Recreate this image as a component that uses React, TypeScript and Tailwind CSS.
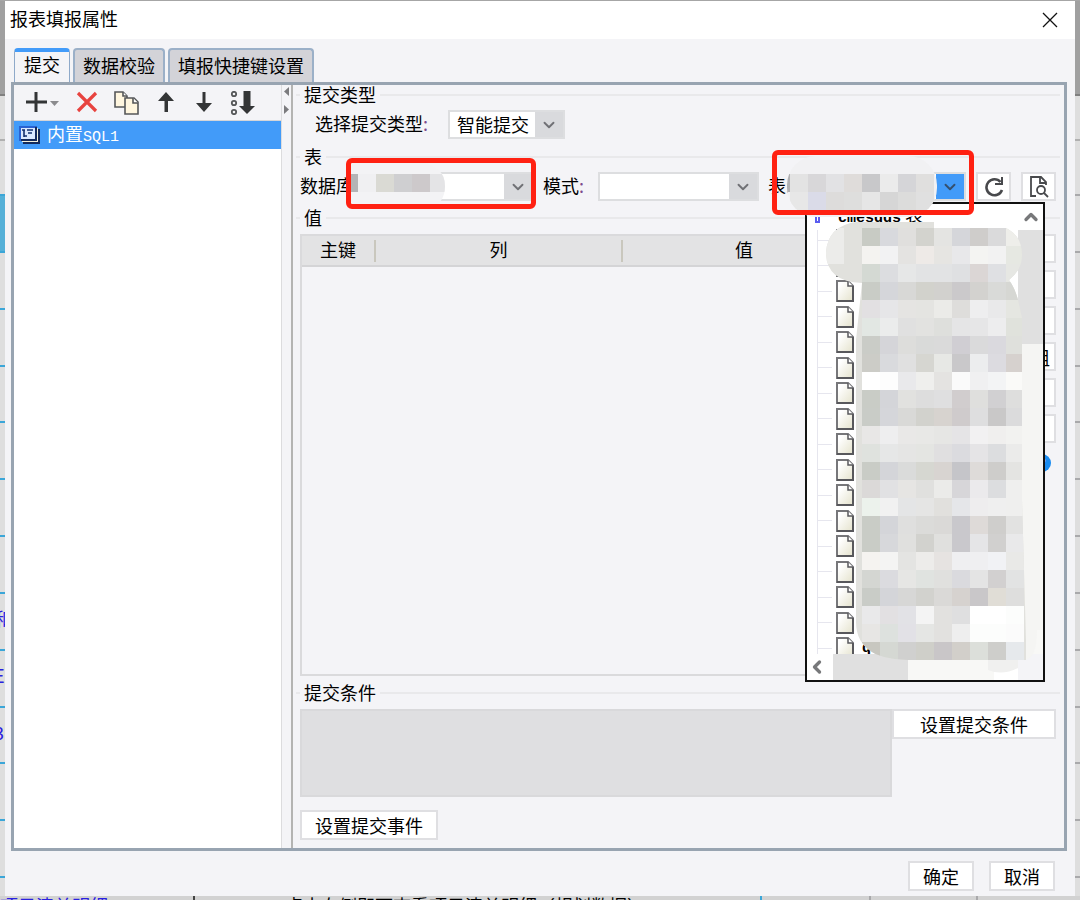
import { ReactNode } from 'react'
import { ChevronDown, ChevronLeft, ChevronUp } from 'lucide-react'

const TABS = ['提交', '数据校验', '填报快捷键设置']

// One colour per 18px cell, left to right, top to bottom
const LIST_CELLS = [
  'c8cbc4 d8d9dd e0dfdd d3d3ce e4e4e2 d5d6da cfcdcb dadadb eeeeea',
  'f4f3f0 f2f2f3 e4e3e1 eeeae7 e6e5e2 e8e8ea f4f4f2 f2f2f2 e6e8e2',
  'd4d9d3 dcdde0 e6e7e7 e2e3e4 e2e3e4 dfe0e2 dbd6d5 dfe0e3 e6e7e3',
  'c9ccc6 d5d6da d8d8d6 d2d2cc d2d1ce cbc9cb d3d2cf d9dad8 d6d7d3',
  'e2e0e2 e6e6e8 e5e4e2 e4e4e1 ebebe8 dedddb eeeeef e9e9ea e5e6e1',
  'e2e7e3 ebecec e0e0e0 e2e2e0 dedfdc e5e5e6 e6e6e7 ededee e0e2dc',
  'caccc7 d5d5d9 dddddb d9dad9 dadada d0ced3 dadadb dad9de dfe0dc',
  'ccccc7 d9dadd e0e0e0 d6d6d1 e7e8e5 c9c8ca ecedee dcdbe0 d6d1ce',
  'ffffff fdfdfd e9e9eb efefed e4e3e1 fafafa f0f0f1 f3f4f5 fafaf8',
  'c9ccc6 d4d5d9 e1e1df dddddd dfdfe0 d1cdce dfdfdd d1d0d2 dededd',
  'c9ccc7 d5d6da d9d9d7 d2d2cd d7d3cf cfcbcc dededf c9c8c8 dbdbdc',
  'e8e7e6 eeeeef e9e8e7 e8e8e6 e6e6e4 e5e4e6 f2f1f2 f0efee f2f2f0',
  'dfe2de e6e7e7 e5e5e4 e4e5e2 e0dfe0 dbdbdf e5e4e6 dcdddf ebebea',
  'c9ccc6 d4d5d9 dadbda d6d7d1 d8d4d1 c5c5c9 dedbd9 cecdcb e4e4e2',
  'dbd9d8 e1e1e3 e6e5e3 e0e0de ebebe9 d7d6d9 ebeaec dcdddf efefee',
  'ecf2ec f1f1f1 e4e5e6 e5e5e4 e1e0dd e5e6e9 eeedee efefef efefee',
  'c9ccc6 d4d5d9 dfdfde dbdbd9 dad9d7 c9c8cc dedad8 cfcecc e2e2e1',
  'c9ccc6 d7d8db e0e0de d2d2ce e0e0de c9c8cc e5e5e7 d1d0cf e9e9ea',
  'f5f3f0 f4f4f3 e4e4e2 edecea e6e3e1 efeff1 efeff1 f1f2f5 e9e9e7',
  'd4d6d2 dbdbdf e6e6e4 e0e3e0 e0e0de dadade e4e4e4 d2d0d0 e2e3e3',
  'c9ccc7 d4d5d9 d7d7d6 d2d2ce dad9d7 d6d2cf c9c7c9 e0ddd6 dededd',
  'e9e9ea e2e0e2 e2e2e6 f4f4f4 e2e1df dfdfe0 ffffff ffffff fcfdfc',
  'e7e6e4 dde1de e2e1e6 e5e6e4 e2e1df eeeeee fcfdfc fcfdfc fbfbfb',
  'c8c7c0 d5d8d3 d0d0cf cfcfc9 c9c6c8 d2cfca dcdfda cececb e6e9ec'
]

const TABLE_CELLS = [
  'e3e3e3 d8d7d9 e2e2e4 dfdcda c8c8ca ebebeb d5d5d8 e0dfde',
  'e7e7e7 dadbe8 dddcdb dededd e6e6e6 d6d6d6 dcdcdb e0e0e0'
]

const DATABASE_CELLS = ['f0f0f2 dadad4 cfcfd1 cdc9cb e4e4e6']

function Cells({ rows, x, y }: { rows: string[]; x: number; y: number }) {
  return (
    <>
      {rows.map((row, r) =>
        row.split(' ').map((color, c) => (
          <rect key={`${r}-${c}`} x={x + c * 18} y={y + r * 18} width={18} height={18} fill={`#${color}`} shapeRendering="crispEdges" />
        ))
      )}
    </>
  )
}

function Legend({ children }: { children: ReactNode }) {
  return (
    <div className="flex items-center h-5 -mx-1 gap-1 leading-[18px]">
      <span className="w-1 h-0.5 bg-[#e9e9eb]" />
      <h2 className="pb-0.5">{children}</h2>
      <span className="flex-1 h-0.5 bg-[#e9e9eb]" />
    </div>
  )
}

function FieldLabel({ htmlFor, children }: { htmlFor: string; children: ReactNode }) {
  return (
    <label htmlFor={htmlFor} className="flex pb-1 leading-6 whitespace-nowrap">
      {children}
      <span className="w-[9px] text-[#7d4a8d]">:</span>
    </label>
  )
}

interface ComboProps {
  id: string
  value?: string
  active?: boolean
}

function Combo({ id, value = '', active = false }: ComboProps) {
  return (
    <div className="relative flex h-[29px] border-2 border-[#dddee0] bg-white">
      <select id={id} defaultValue={value} className="appearance-none flex-1 min-w-0 pl-[7px] leading-[25px] bg-white outline-none">
        <option value={value}>{value}</option>
      </select>
      <span className={`flex items-center justify-center w-7 pointer-events-none ${active ? 'bg-[#429bf9] text-[#35506e]' : 'bg-[#d9dadd] text-[#707175]'}`}>
        <ChevronDown className="w-[18px] h-[18px]" strokeWidth={2.5} />
      </span>
    </div>
  )
}

function Button({ className = '', label, children }: { className?: string; label?: string; children?: ReactNode }) {
  return (
    <button type="button" aria-label={label} className={`flex items-center justify-center shrink-0 bg-white border-2 border-[#dfdfe2] leading-none ${className}`}>
      {children}
    </button>
  )
}

function PageIcon() {
  return (
    <svg className="w-[18px] h-[22px]" viewBox="0 0 18 22" fill="none">
      <defs>
        <linearGradient id="page" x1="0" y1="0" x2="1" y2="1">
          <stop offset="0.2" stopColor="#ffffff" />
          <stop offset="1" stopColor="#e4e2cc" />
        </linearGradient>
      </defs>
      <path d="M1 1h11l5 5v15H1z" fill="url(#page)" stroke="#77777a" strokeWidth="2" />
      <path d="M12 1v5h5" fill="#ffffff" stroke="#5a5a5e" strokeWidth="1.5" />
      <path d="M1 21h16V6" stroke="#58585c" strokeWidth="2" />
    </svg>
  )
}

function Toolbar() {
  return (
    <div className="flex items-center h-9 pl-3 bg-[#f4f4f7] border-b border-[#d5d5d8]">
      <button type="button" aria-label="添加" className="mr-4">
        <svg className="w-[34px] h-6" viewBox="0 0 34 24">
          <path d="M10 1v20M0 11h21" stroke="#333536" strokeWidth="3" />
          <path d="M24 10h9l-4.500 5z" fill="#8b8b8e" />
        </svg>
      </button>
      <button type="button" aria-label="删除" className="mr-4">
        <svg className="w-[22px] h-6" viewBox="0 0 22 24">
          <path d="M2 2l18 18M20 2L2 20" stroke="#e8433f" strokeWidth="3.2" />
        </svg>
      </button>
      <button type="button" aria-label="复制" className="mr-[18px]">
        <svg className="w-[26px] h-6" viewBox="0 0 26 24" stroke="#555759" strokeWidth="1.6">
          <path d="M1 1h8l4 4v11H1z" fill="#fff6df" />
          <path d="M9 1v4h4" fill="#fff" />
          <path d="M11 7h9l4 4v12H11z" fill="#fff6df" />
          <path d="M19 7v5h5" fill="#fff" />
        </svg>
      </button>
      <button type="button" aria-label="上移" className="mr-[22px]">
        <svg className="w-4 h-6" viewBox="0 0 16 24" fill="#333536">
          <path d="M8 1l8 9H10v11H6.500V10H0z" />
        </svg>
      </button>
      <button type="button" aria-label="下移" className="mr-[18px]">
        <svg className="w-4 h-6" viewBox="0 0 16 24" fill="#333536">
          <path d="M8 21l8-9H9.500V1H6.500v11H0z" />
        </svg>
      </button>
      <button type="button" aria-label="置底">
        <svg className="w-[26px] h-6" viewBox="0 0 26 24">
          <g fill="none" stroke="#555759" strokeWidth="1.8">
            <circle cx="4" cy="3" r="2.200" />
            <circle cx="4" cy="12" r="2.200" />
            <circle cx="4" cy="21" r="2.200" />
          </g>
          <path d="M13.500 0h7v15H25l-8 8-8-8h4.500z" fill="#333536" />
        </svg>
      </button>
    </div>
  )
}

function SourcePane() {
  return (
    <div className="flex flex-col w-[268px] shrink-0 bg-white border-r border-[#dcdcde]">
      <Toolbar />
      <ul>
        <li className="flex items-center gap-1.5 h-7 pl-[5px] bg-[#429bf9] text-white">
          <svg className="w-[22px] h-5" viewBox="0 0 22 20">
            <path d="M4 4h17v15H4z" fill="#132a5c" />
            <path d="M3 3h16v14H3z" fill="#f3f1dc" />
            <path d="M1 2h16v13H1z" fill="#dbe9ff" stroke="#2a62d0" strokeWidth="2" />
            <path d="M17 2v13H2" fill="none" stroke="#132a5c" strokeWidth="2" />
            <path d="M3 5h3M5 5v7M8 5h6M9 8h4M5 11h3" fill="none" stroke="#12306f" strokeWidth="1.6" />
          </svg>
          <span className="leading-6">
            内置<span className="text-[15px] font-['Liberation_Mono',monospace]">SQL1</span>
          </span>
        </li>
      </ul>
    </div>
  )
}

function Splitter() {
  return (
    <div className="flex justify-end w-[11px] shrink-0 pt-0.5 pr-px border-r-2 border-[#b4b4b2]">
      <svg className="w-1.5 h-7" viewBox="0 0 6 28" fill="#7b7b7e">
        <path d="M5 0v9L0 4.500z" />
        <path d="M0 18v9l5-4.500z" />
      </svg>
    </div>
  )
}

function TablePopup() {
  return (
    <div className="absolute z-10 left-0 top-[30px] w-[240px] h-[480px] bg-white border-2 border-[#111] leading-none">
      <div className="flex h-[450px]">
        <div className="flex-1 overflow-hidden">
          <ul className="grid auto-rows-fr h-[459px]">
            <li className="flex items-center gap-[18px] pl-2">
              <span className="w-[5px] h-3 border-2 border-[#5a5cf0]" />
              <span className="pb-0.5 whitespace-nowrap">
                <b className="text-[15px] font-['Liberation_Mono',monospace]">cmesdds</b> 表
              </span>
            </li>
            {Array.from({ length: 17 }, (_, i) => (
              <li key={i} className="flex items-center ml-2.5 pb-1 border-l border-[#e6e6ee]">
                <span className="w-3.5 h-px mr-1 bg-[#e6e6ee]" />
                <PageIcon />
                {i === 16 && <b className="ml-2 text-[15px] font-['Liberation_Mono',monospace]">q</b>}
              </li>
            ))}
          </ul>
        </div>
        <div className="flex flex-col w-[25px] bg-[#f8f8f6]">
          <span className="flex items-center justify-center h-[26px] bg-white">
            <ChevronUp className="w-5 h-5 text-[#77787a]" strokeWidth={4} />
          </span>
          <span className="h-[115px] bg-[#e0e0e0]" />
        </div>
      </div>
      <div className="flex h-[26px] bg-[#f8f8f6]">
        <span className="flex items-center justify-center w-[26px] bg-white">
          <ChevronLeft className="w-5 h-5 -ml-1.5 text-[#77787a]" strokeWidth={4} />
        </span>
        <span className="w-[75px] bg-[#e0e0e0]" />
        <span className="flex-1" />
        <span className="w-6 bg-white" />
        <span className="w-[25px] bg-[#f4f4f7]" />
      </div>
      <svg className="absolute left-[18px] top-4 w-[218px] h-[456px]" viewBox="825 220 218 456">
        <defs>
          <clipPath id="list-blob">
            <path d="M856 222H934V228H1006Q1022 236 1022 255Q1022 270 1009 280Q1015 288 1018 300L1022 318V500L1026 640V660H915Q885 660 872 652Q856 642 856 622V340L862 283Q826 282 826 252Q828 226 856 222z" />
          </clipPath>
        </defs>
        <path d="M1022 344h21v286l-6 0q0 28 -12 30h-6z" fill="#f5f5f3" />
        <path d="M988 658h30v10q-16 8 -30 2z" fill="#f0f0ef" />
        <g clipPath="url(#list-blob)">
          <rect x="825" y="220" width="218" height="456" fill="#e1e1dd" />
          <rect x="826" y="228" width="18" height="36" fill="#ececea" />
          <Cells rows={LIST_CELLS} x={862} y={228} />
        </g>
      </svg>
    </div>
  )
}

function TableRow() {
  return (
    <div className="grid grid-cols-[234fr_216fr_198px_81px] items-center gap-[9px] mt-[5px] mb-[7px]">
      <div className="relative flex items-center gap-2.5">
        <FieldLabel htmlFor="database">数据库</FieldLabel>
        <div className="flex-1">
          <Combo id="database" />
        </div>
        <svg className="absolute left-[51px] top-[-10px] w-[96px] h-12" viewBox="351 162 96 48">
          <defs>
            <clipPath id="database-blob">
              <path d="M351 162H420Q445 166 445 186Q445 204 428 210H351z" />
            </clipPath>
          </defs>
          <g clipPath="url(#database-blob)">
            <rect x="351" y="162" width="96" height="48" fill="#f3f3f5" />
            <rect x="351" y="174" width="7" height="18" fill="#b4b4b6" />
            <Cells rows={DATABASE_CELLS} x={358} y={174} />
          </g>
        </svg>
        <span className="absolute z-20 left-[46px] right-[-2px] -top-3.5 h-[51px] border-[5px] border-[#ff2112] rounded-md pointer-events-none" />
      </div>
      <div className="flex items-center gap-2.5">
        <FieldLabel htmlFor="schema">模式</FieldLabel>
        <div className="flex-1">
          <Combo id="schema" />
        </div>
      </div>
      <div className="relative flex items-center gap-2.5">
        <FieldLabel htmlFor="table">表</FieldLabel>
        <div className="relative flex-1">
          <Combo id="table" active />
          <TablePopup />
        </div>
        <svg className="absolute z-10 left-[19px] top-[-16px] w-[151px] h-[62px]" viewBox="787 156 151 62">
          <defs>
            <clipPath id="table-blob">
              <rect x="787" y="156" width="150" height="61" rx="29" />
            </clipPath>
          </defs>
          <g clipPath="url(#table-blob)">
            <rect x="787" y="156" width="151" height="62" fill="#f1f1f3" />
            <rect x="787" y="174" width="3" height="18" fill="#b0b0b2" />
            <Cells rows={TABLE_CELLS} x={790} y={174} />
          </g>
        </svg>
        <span className="absolute z-20 left-1 right-[-8px] top-[-22px] h-[65px] border-[5px] border-[#ff2112] rounded-md pointer-events-none" />
      </div>
      <div className="flex justify-end gap-2.5">
        <Button className="w-[35px] h-[29px]" label="刷新">
          <svg className="w-5 h-5" viewBox="0 0 20 20" fill="none" stroke="#48494c" strokeWidth="2.6">
            <path d="M16.500 5A8 8 0 1 0 18 13" />
            <path d="M18 0v7h-7" strokeWidth="2" />
          </svg>
        </Button>
        <Button className="w-[35px] h-[29px]" label="预览">
          <svg className="w-5 h-[22px]" viewBox="0 0 20 22" fill="none" stroke="#48494c" strokeWidth="1.8">
            <path d="M7 20H2V1h10l5 5v3" />
            <path d="M11 1v6h6" />
            <circle cx="12" cy="14" r="4" />
            <path d="M15 17l4 4" />
          </svg>
        </Button>
      </div>
    </div>
  )
}

function SubmitPane() {
  return (
    <div className="flex flex-col flex-1 min-w-0 pl-[7px] pr-2 pb-2">
      <Legend>提交类型</Legend>
      <div className="flex items-center gap-4 mt-[5px] mb-2 pl-[15px]">
        <FieldLabel htmlFor="submit-type">选择提交类型</FieldLabel>
        <div className="w-[117px]">
          <Combo id="submit-type" value="智能提交" />
        </div>
      </div>

      <Legend>表</Legend>
      <TableRow />

      <Legend>值</Legend>
      <div className="flex flex-1 gap-[25px] mt-1.5 mb-[7px]">
        <div className="flex-1 border-2 border-[#dadadc]">
          <table className="w-full table-fixed leading-none">
            <thead>
              <tr className="h-[30px] bg-[#e3e3e4] border-b-2 border-[#d4d4d6]">
                <th className="w-[74px] font-normal">
                  <div className="h-[22px] leading-[18px] border-r-2 border-[#c9c7bd]">主键</div>
                </th>
                <th className="w-[247px] font-normal">
                  <div className="h-[22px] leading-[18px] border-r-2 border-[#c9c7bd]">列</div>
                </th>
                <th className="font-normal">
                  <div className="h-[22px] leading-[18px]">值</div>
                </th>
              </tr>
            </thead>
            <tbody />
          </table>
        </div>
        <div className="flex flex-col gap-[7px] w-[164px]">
          <Button className="h-[29px]" label="智能添加字段" />
          <Button className="h-[29px]" label="智能添加单元格" />
          <Button className="h-[29px]" label="批量修改字段" />
          <Button className="h-[29px] justify-end pr-1">组</Button>
          <Button className="h-[29px]" label="添加字段" />
          <Button className="h-[29px]" label="删除字段" />
          <span className="flex items-center justify-center self-end w-[18px] h-[18px] mt-1 mr-[5px] rounded-full bg-[#1a8cf0] text-white text-sm font-bold">
            ?
          </span>
        </div>
      </div>

      <Legend>提交条件</Legend>
      <div className="flex items-start mt-1.5 mb-[13px]">
        <textarea aria-label="提交条件" readOnly className="flex-1 h-[88px] resize-none bg-[#dfdfe1] border-2 border-[#d9d9db] outline-none" />
        <Button className="w-[164px] h-[30px]">设置提交条件</Button>
      </div>
      <Button className="w-[138px] h-[30px]">设置提交事件</Button>
    </div>
  )
}

// Sheet rows that show on either side of the dialog
function SheetEdge({ side }: { side: 'left' | 'right' }) {
  const line = side === 'left' ? 'border-[#3ba6d8]' : 'border-[#a9a9ab]'
  const marks = ['', '', '', '', '', '', '和', 'E', '3', '', '']
  return (
    <div className="flex flex-col w-[5px] shrink-0 overflow-hidden bg-[#dedede] text-[#2a20e0]">
      <div className="h-[95px] shrink-0 bg-[#a0a0a0] border-b-2 border-[#808080]" />
      <div className="h-[45px] shrink-0 border-b-2 border-[#b0b0b0]" />
      <div className={`h-[55px] shrink-0 border-b-2 ${line}`} />
      <div className={`h-[57px] shrink-0 border-b-2 ${line} ${side === 'left' ? 'bg-[#55b0d8]' : ''}`} />
      <div className="flex flex-col h-[625px] shrink-0">
        {marks.map((mark, i) => (
          <div key={i} className={`flex flex-1 items-center pb-1.5 border-b-2 leading-none ${line}`}>
            {side === 'left' && mark && <span className="-ml-1.5">{mark}</span>}
          </div>
        ))}
      </div>
    </div>
  )
}

export default function App() {
  return (
    <div className="flex flex-col h-screen min-h-[700px] overflow-hidden bg-[#a6a6a6] pt-px text-lg text-black font-['Noto_Sans_CJK_SC',sans-serif]">
      <div className="flex flex-1 min-h-0">
        <SheetEdge side="left" />
        <div className="flex flex-col flex-1 min-w-0 bg-[#f4f4f7]" role="dialog" aria-labelledby="dialog-title">
          <header className="flex items-center justify-between h-[38px] shrink-0 pl-[5px] pr-4 bg-white">
            <h1 id="dialog-title" className="pb-1">报表填报属性</h1>
            <button type="button" aria-label="关闭">
              <svg className="w-[18px] h-4" viewBox="0 0 18 16" stroke="#111" strokeWidth="1.3">
                <path d="M2 1l14 14M16 1L2 15" />
              </svg>
            </button>
          </header>

          <div className="flex items-end gap-[3px] h-[43px] shrink-0 pl-[9px] leading-none" role="tablist">
            {TABS.map((tab, i) => (
              <button
                key={tab}
                type="button"
                role="tab"
                aria-selected={i === 0}
                className={
                  i === 0
                    ? 'h-[34px] px-[9px] pb-1.5 border border-t-4 border-b-0 border-[#8ea9c9] border-t-[#429bf9] rounded-t-sm bg-[#f4f4f7]'
                    : 'h-[34px] px-2 pb-0.5 border-2 border-b-0 border-[#9bb0c8] rounded-t-sm bg-[#d3d3d8]'
                }
              >
                {tab}
              </button>
            ))}
          </div>

          <main className="flex flex-1 min-h-0 ml-1.5 mr-2 border-[3px] border-[#98a4b1]">
            <SourcePane />
            <Splitter />
            <SubmitPane />
          </main>

          <footer className="flex items-center justify-end gap-[15px] h-[45px] shrink-0 pt-1 pr-5">
            <Button className="w-[66px] h-[30px]">确定</Button>
            <Button className="w-[66px] h-[30px]">取消</Button>
          </footer>
        </div>
        <SheetEdge side="right" />
      </div>

      <div className="flex h-1 shrink-0 overflow-hidden bg-[#d2d2d2] leading-none whitespace-nowrap">
        <span className="w-[195px] border-r-2 border-[#444] text-[#2a20e0]">项目清单明细</span>
        <span className="w-[567px] pl-[90px] border-r-2 border-[#3ba6d8]">点击右侧即可查看项目清单明细（规划数据）</span>
        <span className="flex-1" />
        <span className="w-[109px] border-x-2 border-[#a9a9ab]" />
        <span className="w-[102px]" />
      </div>
    </div>
  )
}
